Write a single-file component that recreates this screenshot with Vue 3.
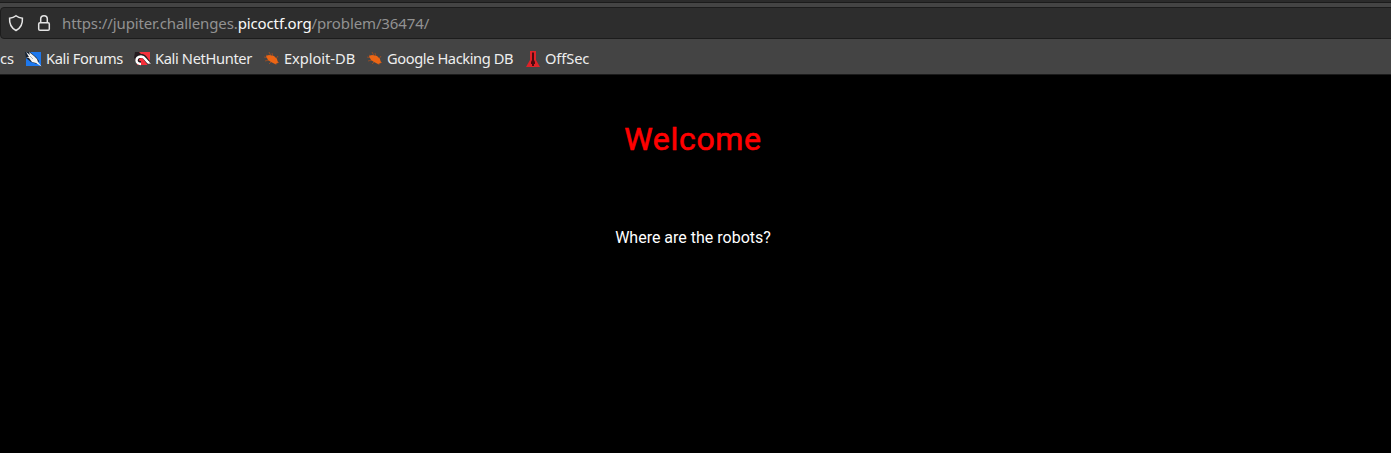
<script setup>
</script>

<template>
  <div class="window">
    <div class="tabs"></div>
    <nav class="toolbar">
      <div class="urlbar">
        <svg class="shield" width="16" height="18" viewBox="0 0 16 18"><path d="M8 1.7C6.3 3.2 4.1 4 1.6 4.2C1.2 9.4 3.1 13.8 8 16.5C12.9 13.8 14.8 9.4 14.4 4.2C11.9 4 9.7 3.2 8 1.7Z" /></svg>
        <svg class="lock" width="14" height="18" viewBox="0 0 14 18"><rect x="1.7" y="8.7" width="10.6" height="7.6" rx="1.3" /><path d="M3.7 8.5V5a3.3 3.3 0 0 1 6.6 0v3.5" /></svg>
        <span class="address">https://jupiter.challenges.<b>picoctf.org</b>/problem/36474/</span>
      </div>
    </nav>
    <div class="bookmarks">
      <span class="item docs">cs</span>
      <span class="item forums">
        <svg width="17" height="16" viewBox="0 0 17 16"><path fill="#1d78ee" d="M3 1H16V15H1V6Z" /><path fill="#172332" d="M0 1H5L11 6L14 10L12 13L6 11L1 7Z" /><path fill="#f4f4f4" d="M1 1L5 4L4 1L9 5L12 8L13 11L16.5 15.5L11 12L7 11L4 7L1 6L4 6Z" /><path stroke="#8c98a5" stroke-width=".7" d="M5 5L8 8" /></svg>
        <span>Kali Forums</span>
      </span>
      <span class="item hunter">
        <svg width="17" height="16" viewBox="0 0 17 16"><path fill="#f5303b" d="M5 1H16V11L13 14H3V5Z" /><path fill="#251c20" d="M1 1H5L7 3L2 6V9L0 7Z" /><path fill="none" stroke="#211b1d" stroke-width="4" d="M7 12C1 12 2 5 8 5C11 5 11 8 15 12" /><path fill="none" stroke="#fff" stroke-width="2.4" d="M7 13C1 13 1 6 7 5.5C11 5.5 11 9 15 12" /><path fill="#fff" d="M12 8L17 13L13 12Z" /></svg>
        <span>Kali NetHunter</span>
      </span>
      <span class="item exploit">
        <svg class="bug" width="16" height="16" viewBox="0 0 16 16"><path class="legs" d="M0 6L5 7M5 1L7 5M8 2L9 6M1 10L5 9M5 13L8 10M12 14L11 10M15 12L12 9M14 5L12 8M2 4L5 6" /><path class="body" d="M2 5L5 4L10 5L13 8L14 12L11 13L7 11L4 9Z" /></svg>
        <span>Exploit-DB</span>
      </span>
      <span class="item google">
        <svg class="bug" width="16" height="16" viewBox="0 0 16 16"><path class="legs" d="M0 6L5 7M5 1L7 5M8 2L9 6M1 10L5 9M5 13L8 10M12 14L11 10M15 12L12 9M14 5L12 8M2 4L5 6" /><path class="body" d="M2 5L5 4L10 5L13 8L14 12L11 13L7 11L4 9Z" /></svg>
        <span>Google Hacking DB</span>
      </span>
      <span class="item offsec">
        <svg width="14" height="16" viewBox="0 0 14 16"><path fill="#df2228" d="M4 0H10V9L14 16H0L4 9Z" /><path fill="#4b0b10" d="M6 2L7 1L8 2V9L9 11V13H8V15H6V13H5V11L6 9Z" /></svg>
        <span>OffSec</span>
      </span>
    </div>
    <main>
      <h1>Welcome</h1>
      <p>Where are the robots?</p>
    </main>
  </div>
</template>

<style>
body { margin: 0; background: #000; }
</style>

<style scoped>
.window { width: 1391px; height: 453px; overflow: hidden; background: #000; font-family: "Noto Sans", sans-serif; }
.tabs { height: 3px; box-sizing: border-box; background: #2b2b2b; border-bottom: 1px solid #1b1b1b; }
.toolbar { height: 40px; box-sizing: border-box; padding-top: 4px; background: #444; }
.urlbar { height: 32px; width: 1400px; box-sizing: border-box; border: 1px solid #1c1c1c; border-radius: 4px; background: #2d2d2d; display: flex; align-items: center; padding-left: 7px; }
.shield, .lock { fill: none; stroke: #e5e5e5; stroke-width: 1.5; }
.lock { margin-left: 13px; }
.address { margin-left: 11px; font-size: 15px; letter-spacing: -.12px; line-height: 30px; color: #929292; white-space: nowrap; }
.address b { color: #fafafa; font-weight: 400; }
.bookmarks { height: 32px; box-sizing: border-box; background: #444; border-bottom: 1px solid #1b1b1b; display: flex; font-size: 14.67px; line-height: 30px; color: #eee; }
.item { display: flex; align-items: center; height: 30px; box-sizing: border-box; flex: none; gap: 4px; white-space: nowrap; }
.item svg { position: relative; top: 1px; }
.docs { width: 25px; }
.forums { width: 109px; letter-spacing: -.36px; }
.hunter { width: 130px; letter-spacing: -.36px; }
.exploit { width: 103px; letter-spacing: -.04px; }
.google { width: 159px; letter-spacing: -.41px; }
.offsec { gap: 5px; letter-spacing: -.1px; }
.bug .body { fill: #ec6514; }
.bug .legs { fill: none; stroke: #a64e20; stroke-width: .8; }
main { font-family: Roboto, sans-serif; text-align: center; width: 1386px; }
h1 { margin: 44px 0 0; color: #f00; font-size: 32px; letter-spacing: .7px; line-height: 40px; font-weight: 400; -webkit-text-stroke: .6px #f00; }
p { margin: 69px 0 0; color: #fff; font-size: 16px; line-height: 20px; }
</style>
